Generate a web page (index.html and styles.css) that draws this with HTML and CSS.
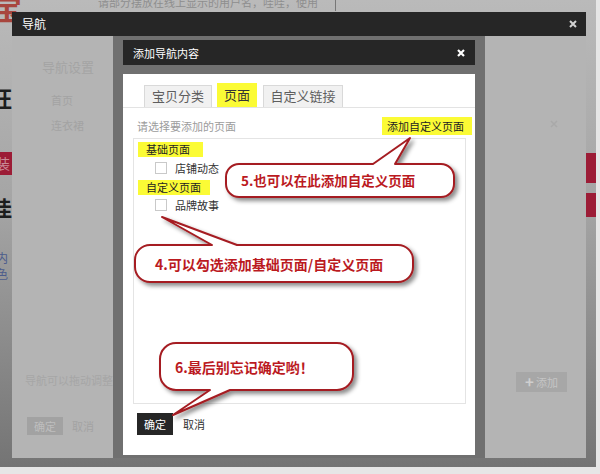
FILE: index.html
```html
<!DOCTYPE html>
<html lang="zh-CN">
<head>
<meta charset="utf-8">
<title>导航</title>
<link rel="stylesheet" href="styles.css">
</head>
<body>
<div class="page">
  <div class="page-search">请部分摆放在线上显示的用户名，哇哇，使用</div>
  <div class="page-caret"></div>
  <div class="page-logo">宝</div>
  <div class="page-glyph g1">旺</div>
  <div class="page-bar bar-l1">装</div>
  <div class="page-glyph g2">佳</div>
  <div class="page-link">内<br>色</div>
  <div class="page-bar bar-r1"></div>
  <div class="page-bar bar-r2"></div>
</div>

<section class="dlg-outer">
  <header class="outer-head">
    <span>导航</span>
    <svg class="close" width="8" height="8" viewBox="0 0 8 8"><path d="M1 1L7 7M7 1L1 7"/></svg>
  </header>
  <div class="outer-body">
    <aside class="side">
      <h2>导航设置</h2>
      <ul>
        <li>首页</li>
        <li>连衣裙</li>
      </ul>
      <p class="tip">导航可以拖动调整排列顺序</p>
      <div class="ghost-acts">
        <span class="ghost-ok">确定</span>
        <span class="ghost-cancel">取消</span>
      </div>
    </aside>
    <div class="content">
      <svg class="ghost-x" width="8" height="8" viewBox="0 0 8 8"><path d="M1 1L7 7M7 1L1 7"/></svg>
      <span class="ghost-add"><b>+</b>添加</span>
    </div>
  </div>
</section>

<section class="dlg-inner">
  <header class="inner-head">
    <span>添加导航内容</span>
    <svg class="close close-w" width="8" height="8" viewBox="0 0 8 8"><path d="M1 1L7 7M7 1L1 7"/></svg>
  </header>
  <div class="inner-body">
    <nav class="tabs">
      <span class="tab tab1">宝贝分类</span>
      <span class="tab tab2">页面</span>
      <span class="tab tab3">自定义链接</span>
    </nav>
    <div class="pane">
      <div class="pick-row">
        <span class="hint">请选择要添加的页面</span>
        <span class="add-custom">添加自定义页面</span>
      </div>
      <div class="listbox">
        <span class="tag tag1">基础页面</span>
        <label class="check-row r1"><span class="box"></span>店铺动态</label>
        <span class="tag tag2">自定义页面</span>
        <label class="check-row r2"><span class="box"></span>品牌故事</label>
      </div>
      <div class="actions">
        <span class="btn-ok">确定</span>
        <span class="btn-cancel">取消</span>
      </div>
    </div>
  </div>
</section>

<svg class="callout-art" width="600" height="474" viewBox="0 0 600 474">
  <defs>
    <filter id="sh" x="-10%" y="-20%" width="130%" height="160%">
      <feDropShadow dx="3" dy="3" stdDeviation="2" flood-color="#000" flood-opacity="0.45"/>
    </filter>
  </defs>
  <path d="M239 164H373L410 138L395 164H441A13 13 0 0 1 454 177V184A13 13 0 0 1 441 197H239A13 13 0 0 1 226 184V177A13 13 0 0 1 239 164Z"/>
  <path d="M150 245H212L162 217L237 245H398A15 15 0 0 1 413 260V267A15 15 0 0 1 398 282H150A15 15 0 0 1 135 267V260A15 15 0 0 1 150 245Z"/>
  <path d="M176 343H337A16 16 0 0 1 353 359V374A16 16 0 0 1 337 390H230L173 415L210 390H176A16 16 0 0 1 160 374V359A16 16 0 0 1 176 343Z"/>
</svg>
<div class="callout-text c5">5.也可以在此添加自定义页面</div>
<div class="callout-text c4">4.可以勾选添加基础页面/自定义页面</div>
<div class="callout-text c6">6.最后别忘记确定哟！</div>
</body>
</html>
```

FILE: styles.css
```css
* { box-sizing: border-box; margin: 0; padding: 0; }
html, body { width: 600px; height: 474px; }
body {
  position: relative;
  overflow: hidden;
  background: #e6e6e6;
  font-family: "Noto Sans CJK SC", "Noto Sans", sans-serif;
  color: #333;
}

/* underlying page, already dimmed by the modal shade */
.page {
  position: absolute; left: 0; top: 0; width: 596px; height: 467px;
  overflow: hidden;
  background: linear-gradient(#bababa 0, #a4a4a4 45%, #747474 100%);
}
.page-search {
  position: absolute; left: 98px; top: -6px;
  font-size: 11px; line-height: 16px; color: #8e8e8e; white-space: nowrap;
}
.page-caret { position: absolute; left: 335px; top: 0; width: 1px; height: 11px; background: #777; }
.page-logo {
  position: absolute; left: -8px; top: -12px;
  font-size: 30px; line-height: 38px; font-weight: 700; color: #a8463e;
}
.page-glyph { position: absolute; font-weight: 700; color: #1d1d1d; }
.g1 { left: -10px; top: 84px; font-size: 22px; line-height: 26px; }
.g2 { left: -9px; top: 195px; font-size: 21px; line-height: 25px; }
.page-bar { position: absolute; background: #9c1c36; overflow: hidden; }
.bar-l1 { left: 0; top: 152px; width: 12px; height: 23px; color: #c98a96; font-size: 14px; line-height: 23px; text-indent: -4px; }
.bar-r1 { left: 586px; top: 153px; width: 10px; height: 30px; }
.bar-r2 { left: 586px; top: 193px; width: 10px; height: 24px; }
.page-link {
  position: absolute; left: -4px; top: 250px;
  font-size: 12px; line-height: 16px; color: #4c5c8c;
}

/* outer dialog */
.dlg-outer {
  position: absolute; left: 12px; top: 12px; width: 574px; height: 446px;
  display: flex; flex-direction: column;
}
.outer-head {
  height: 24px; flex: none; background: #262626;
  display: flex; align-items: center; justify-content: space-between;
  padding: 0 9px 0 10px; color: #fff; font-size: 12px; line-height: 24px;
}
.close path { stroke: #d2d2d2; stroke-width: 2; fill: none; }
.close-w path { stroke: #fff; stroke-width: 2.2; }
.outer-body { flex: 1; background: #b4b4b4; display: flex; }

.side {
  width: 101px; flex: none; display: flex; flex-direction: column;
  padding-bottom: 23px;
}
.side h2 {
  font-size: 13px; font-weight: 400; line-height: 20px; color: #a4a4a4;
  margin: 21px 0 0 30px; white-space: nowrap;
}
.side ul { list-style: none; margin: 15px 0 0 39px; font-size: 11px; line-height: 16px; color: #a3a3a3; }
.side li + li { margin-top: 9px; }
.tip {
  margin: auto 0 0 13px; font-size: 11px; line-height: 16px; color: #a6a6a6; white-space: nowrap;
}
.ghost-acts { margin: 29px 0 0 15px; display: flex; align-items: center; gap: 9px; font-size: 11px; }
.ghost-ok {
  width: 36px; height: 18px; line-height: 18px; text-align: center;
  background: #a2a2a2; color: #bebebe;
}
.ghost-cancel { color: #a3a3a3; }

.content { flex: 1; display: flex; flex-direction: column; align-items: flex-end; }
.ghost-x { margin: 84px 28px 0 0; }
.ghost-x path { stroke: #a9a9a9; stroke-width: 1.5; fill: none; }
.ghost-add {
  margin: 244px 19px 0 0; width: 51px; height: 20px;
  background: #a7a7a7; color: #c5c5c5; font-size: 11px;
  display: flex; align-items: center; justify-content: center; gap: 2px;
}
.ghost-add b { font-size: 15px; line-height: 20px; color: #cfcfcf; }

/* inner dialog */
.dlg-inner {
  position: absolute; left: 113px; top: 36px; width: 372px; height: 422px;
  background: #707070; padding: 4px 10px 3px;
  display: flex; flex-direction: column;
}
.inner-head {
  height: 25px; flex: none; background: #262626;
  display: flex; align-items: center; justify-content: space-between;
  padding: 0 10px; color: #fff; font-size: 11px;
}
.inner-body { margin-top: 9px; flex: 1; background: #fff; display: flex; flex-direction: column; }

.tabs {
  height: 34px; flex: none; display: flex; align-items: flex-end; gap: 5px;
  padding: 9px 0 0 21px; border-bottom: 1px solid #e3e3e3;
}
.tab {
  height: 22px; line-height: 20px; text-align: center;
  border: 1px solid #d9d9d9; border-bottom: 0; background: #f1f1f1;
  font-size: 13px; color: #5e5e5e;
}
.tab1 { width: 68px; }
.tab2 { width: 40px; height: 24px; line-height: 24px; border: 0; background: #fbfb35; color: #333; }
.tab3 { width: 80px; margin-left: 1px; }

.pane { padding: 0 9px 0 10px; display: flex; flex-direction: column; }
.pick-row {
  margin: 9px -6px 0 4px; height: 18px;
  display: flex; justify-content: space-between; align-items: center;
}
.hint { font-size: 11px; color: #9c9c9c; }
.add-custom {
  width: 90px; height: 18px; line-height: 18px; padding-left: 5px;
  background: #fbfb35; font-size: 11px; color: #222; white-space: nowrap;
}
.listbox {
  margin-top: 3px; height: 266px; border: 1px solid #e4e4e4; padding: 3px 4px;
  display: flex; flex-direction: column; align-items: flex-start;
}
.tag {
  height: 15px; line-height: 15px; background: #fbfb35;
  font-size: 11px; color: #222; white-space: nowrap;
}
.tag1 { padding: 0 13px 0 8px; }
.tag2 { padding: 0 9px 0 8px; margin-top: 5px; }
.check-row {
  height: 14px; display: flex; align-items: center; padding-left: 17px;
  font-size: 11px; color: #333;
}
.r1 { margin-top: 4px; }
.r2 { margin-top: 3px; }
.box { width: 12px; height: 12px; border: 1px solid #c9c9c9; background: #fff; margin-right: 8px; }

.actions { margin: 9px 0 0 4px; display: flex; align-items: center; gap: 10px; font-size: 11px; }
.btn-ok { width: 36px; height: 22px; line-height: 22px; text-align: center; background: #262626; color: #fff; }
.btn-cancel { color: #333; }

/* annotation callouts */
.callout-art { position: absolute; left: 0; top: 0; }
.callout-art path {
  fill: #fff; stroke: #a51d22; stroke-width: 2; stroke-linejoin: round;
  filter: url(#sh);
}
.callout-text {
  position: absolute; display: flex; align-items: center;
  font-size: 14px; font-weight: 700; line-height: 1; color: #bb1a1f; white-space: nowrap;
}
.c5 { left: 226px; top: 164px; width: 228px; height: 33px; padding-left: 15px; font-size: 13.5px; }
.c4 { left: 135px; top: 245px; width: 278px; height: 37px; padding-left: 20px; }
.c6 { left: 160px; top: 343px; width: 193px; height: 47px; padding-left: 15px; }
```
